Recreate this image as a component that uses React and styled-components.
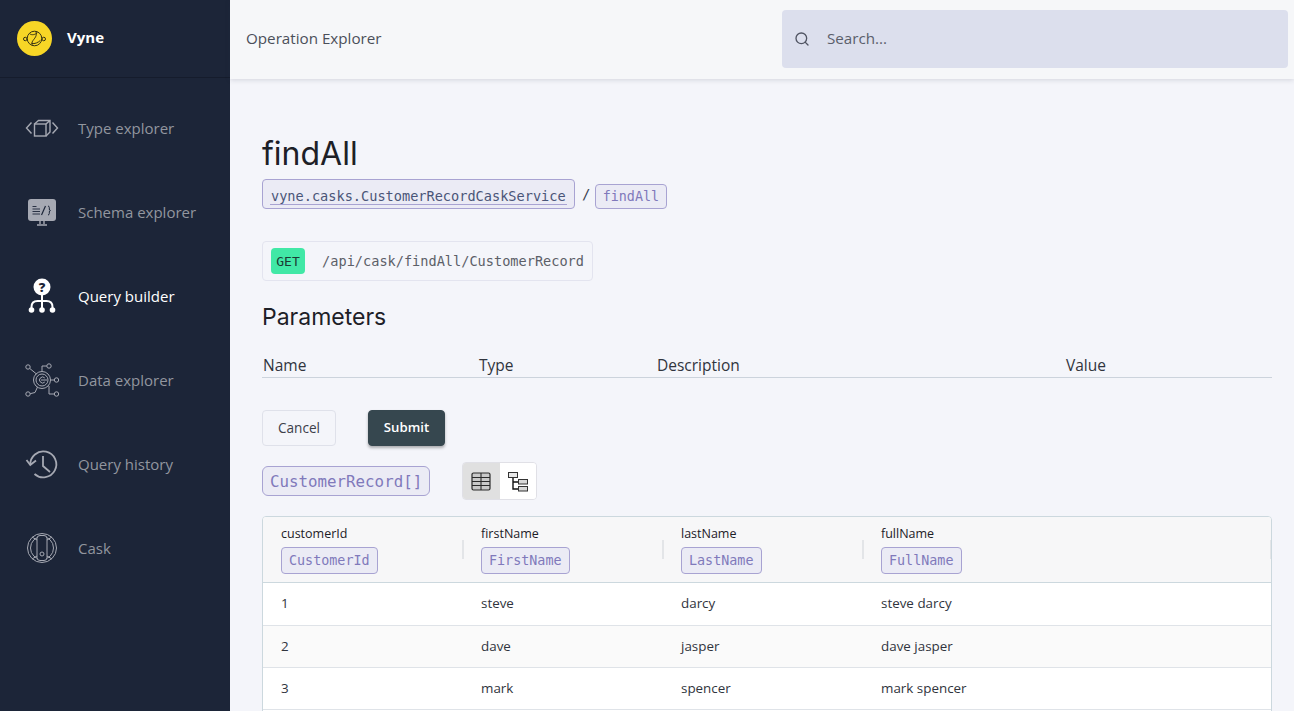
import React from 'react';
import styled, { createGlobalStyle } from 'styled-components';
import { Search } from 'lucide-react';

const UI_FONT = '"Open Sans", "Liberation Sans", sans-serif';
const HEADING_FONT = 'Inter, "Liberation Sans", sans-serif';
const MONO_FONT = '"DejaVu Sans Mono", "Liberation Mono", monospace';

const GlobalStyle = createGlobalStyle`
	html, body {
		margin: 0;
		height: 100%;
		overflow: hidden;
	}
	body {
		font-family: ${UI_FONT};
		background: #f4f5fa;
		color: #1f2430;
	}
`

const Shell = styled.div`
	display: flex;
	height: 711px;
	overflow: hidden;
`

const Sidebar = styled.aside`
	flex: 0 0 230px;
	background: #1c2538;
	display: flex;
	flex-direction: column;
`

const Brand = styled.div`
	height: 78px;
	box-sizing: border-box;
	padding: 0 0 1px 17px;
	display: flex;
	align-items: center;
	gap: 15px;
	border-bottom: 1px solid #151c2c;
	font-size: 15px;
	font-weight: 700;
	color: #ffffff;
`

const BrandName = styled.span`
	margin-bottom: 2px;
`

const Nav = styled.nav`
	padding-top: 8px;
	display: flex;
	flex-direction: column;
`

const NavItem = styled.a`
	height: 84px;
	padding-left: 22px;
	display: flex;
	align-items: center;
	gap: 16px;
	font-size: 15px;
	font-weight: 500;
	color: ${props => props.$active ? '#ffffff' : '#92969f'};
`

const Main = styled.div`
	flex: 1;
	min-width: 0;
	display: flex;
	flex-direction: column;
`

const TopBar = styled.header`
	flex: 0 0 79px;
	box-sizing: border-box;
	padding: 10px 6px 11px 16px;
	display: flex;
	align-items: stretch;
	justify-content: space-between;
	background: #f6f7f9;
	box-shadow: 0 1px 5px rgba(40, 45, 70, 0.16);
	position: relative;
`

const PageName = styled.div`
	align-self: center;
	margin-bottom: 2px;
	font-size: 15.2px;
	color: #4b4f59;
`

const SearchBox = styled.label`
	width: 506px;
	box-sizing: border-box;
	padding-left: 12px;
	display: flex;
	align-items: center;
	gap: 17px;
	background: #dcdfed;
	border-radius: 4px;
	color: #505462;
`

const SearchInput = styled.input`
	flex: 1;
	padding: 0;
	margin-bottom: 2px;
	border: 0;
	outline: 0;
	background: transparent;
	font-family: ${UI_FONT};
	font-size: 15.2px;
	color: #505462;
	&::placeholder {
		color: #5a5e6b;
		opacity: 1;
	}
`

const Content = styled.main`
	padding: 55px 22px 0 32px;
`

const Title = styled.h1`
	margin: 0;
	font-family: ${HEADING_FONT};
	font-size: 32px;
	line-height: 40px;
	font-weight: 400;
	color: #1d2027;
`

const Breadcrumb = styled.div`
	margin-top: 5px;
	display: flex;
	align-items: flex-end;
`

const Slash = styled.span`
	width: 20px;
	box-sizing: border-box;
	padding-left: 3px;
	text-align: center;
	font-family: ${MONO_FONT};
	font-size: 14px;
	line-height: 30px;
	color: #3a3f50;
`

const TypeBadge = styled.span`
	display: inline-flex;
	align-items: center;
	box-sizing: border-box;
	height: ${props => props.$height || 25}px;
	padding: 0 ${props => props.$pad || 7}px;
	border: 1px solid #a8a3d2;
	border-radius: ${props => props.$radius || 4}px;
	background: #ebebf5;
	font-family: ${MONO_FONT};
	font-size: ${props => props.$size || 13.4}px;
	color: #8079bb;
	white-space: nowrap;
`

const ServiceBadge = styled(TypeBadge)`
	color: #4a5578;
`

const ServiceName = styled.span`
	border-bottom: 1px solid #a8a3d2;
	padding: 5px 1px 0;
	line-height: 16px;
`

const Route = styled.div`
	margin-top: 32px;
	width: 331px;
	height: 40px;
	box-sizing: border-box;
	padding: 0 8px;
	display: flex;
	align-items: center;
	gap: 17px;
	border: 1px solid #e3e4ef;
	border-radius: 4px;
`

const Verb = styled.span`
	width: 36px;
	height: 26px;
	display: flex;
	align-items: center;
	justify-content: center;
	border-radius: 4px;
	background: #41e8a6;
	font-family: ${MONO_FONT};
	font-size: 13px;
	color: #1c3b34;
`

const RoutePath = styled.span`
	font-family: ${MONO_FONT};
	font-size: 13.6px;
	color: #5c5f68;
	white-space: nowrap;
`

const SectionTitle = styled.h2`
	margin: 21px 0 0;
	font-family: ${HEADING_FONT};
	font-size: 23px;
	line-height: 30px;
	font-weight: 400;
	color: #1d2027;
`

const ParamsHeader = styled.div`
	margin-top: 21px;
	height: 25px;
	box-sizing: border-box;
	padding-left: 1px;
	display: grid;
	grid-template-columns: 216px 178px 409px 1fr;
	border-bottom: 1px solid #ccd3dc;
	font-size: 15.5px;
	line-height: 24px;
	color: #30343d;
`

const Actions = styled.div`
	margin-top: 32px;
	display: flex;
	gap: 32px;
`

const Button = styled.button`
	height: 36px;
	box-sizing: border-box;
	padding: 0 0 2px;
	width: ${props => props.$width}px;
	border-radius: 4px;
	font-family: ${UI_FONT};
	font-size: ${props => props.$primary ? 13.2 : 13.6}px;
	font-weight: ${props => props.$primary ? 600 : 400};
	border: 1px solid ${props => props.$primary ? '#36474f' : '#dfe1ea'};
	background: ${props => props.$primary ? '#36474f' : 'transparent'};
	color: ${props => props.$primary ? '#ffffff' : '#3c404a'};
	box-shadow: ${props => props.$primary ? '0 2px 3px rgba(0, 0, 0, 0.3)' : 'none'};
`

const ResultBar = styled.div`
	margin-top: 16px;
	display: flex;
	align-items: center;
	gap: 32px;
`

const ViewToggle = styled.div`
	display: flex;
	width: 75px;
	height: 38px;
	box-sizing: border-box;
	border: 1px solid #e0e0e6;
	border-radius: 4px;
	overflow: hidden;
`

const ToggleOption = styled.button`
	flex: 1;
	padding: 0;
	border: 0;
	display: flex;
	align-items: center;
	justify-content: center;
	background: ${props => props.$active ? '#e0e0e0' : '#ffffff'};
`

const Results = styled.div`
	margin-top: 16px;
	border: 1px solid #ccd8de;
	border-radius: 4px;
	overflow: hidden;
	background: #ffffff;
`

const GridRow = styled.div`
	display: grid;
	grid-template-columns: repeat(3, 200px) 1fr;
`

const HeaderRow = styled(GridRow)`
	height: 66px;
	box-sizing: border-box;
	background: #f7f7f8;
	border-bottom: 1px solid #ccd8de;
`

const HeaderCell = styled.div`
	position: relative;
	padding: 8px 18px 0;
	font-size: 12.5px;
	line-height: 18px;
	color: #1d2027;
	display: flex;
	flex-direction: column;
	align-items: flex-start;
	gap: 4px;
	&::after {
		content: '';
		position: absolute;
		right: -1px;
		top: 23px;
		width: 2px;
		height: 19px;
		background: #e3e5e8;
	}
`

const BodyRow = styled(GridRow)`
	height: ${props => props.$height}px;
	box-sizing: border-box;
	padding-bottom: 2px;
	align-items: center;
	background: ${props => props.$alt ? '#fafafa' : '#ffffff'};
	border-bottom: 1px solid #dfe3e8;
`

const BodyCell = styled.div`
	padding-left: 18px;
	font-size: 13.4px;
	color: #30343d;
`

const LOGO = '#2f2d14';
const NAV_GREY = '#a6a9b3';

const VyneLogo = () => (
	<svg width="35" height="35" viewBox="0 0 36 36">
		<circle cx="18" cy="18" r="18" fill="#f7d626" />
		<g fill="none" stroke={LOGO} strokeWidth="1">
			<circle cx="18" cy="18" r="7.5" />
			<circle cx="8.5" cy="18.5" r="1.8" />
			<circle cx="27.5" cy="18.5" r="1.8" />
			<path d="M19.5 11 C21 15 18 18 16.5 20 C15 22 15 24 16 25" />
			<path d="M13 13 C15 15 19 14 21 12 M15 23 C18 24 22 22 24 20" />
		</g>
	</svg>
)

const TypeIcon = () => (
	<svg width="40" height="40" viewBox="0 0 40 40" fill="none" stroke={NAV_GREY} strokeWidth="1.4">
		<path d="M9.5 14.5 L4.5 20 L9.5 25.5" />
		<path d="M30.5 14.5 L35.5 20 L30.5 25.5" />
		<rect x="12.5" y="16" width="11.5" height="12" />
		<path d="M12.5 16 L16.5 12.5 H28 V24 L24 28 M24 16 L28 12.5" />
	</svg>
)

const SchemaIcon = () => (
	<svg width="40" height="40" viewBox="0 0 40 40">
		<rect x="6" y="7" width="28" height="22" rx="3" fill={NAV_GREY} />
		<path d="M18 29 V32 M22 29 V32 M15 33 H25" stroke={NAV_GREY} strokeWidth="1.4" fill="none" />
		<path d="M10.5 14.5 H14.5 M10.5 17 H18 M10.5 19.5 H18 M10.5 22 H18" stroke="#1c2538" strokeWidth="0.9" fill="none" />
		<path d="M19.5 23 L23.5 14" stroke="#1c2538" strokeWidth="1.2" fill="none" />
		<path d="M26 14 C28 14 27 17 27.5 18 C28 18.5 28.5 18.5 28.5 18.5 C28.5 18.5 28 18.5 27.5 19 C27 20 28 23 26 23" stroke="#1c2538" strokeWidth="1" fill="none" />
	</svg>
)

const QueryIcon = () => (
	<svg width="40" height="40" viewBox="0 0 40 40">
		<circle cx="20" cy="11" r="8.5" fill="#ffffff" />
		<text x="20" y="15.5" textAnchor="middle" fontFamily={UI_FONT} fontSize="13" fontWeight="800" fill="#1c2538">?</text>
		<path d="M20 19 V34 M9.5 34 V31 Q9.5 25 15.5 25 H24.5 Q30.5 25 30.5 31 V34" fill="none" stroke="#ffffff" strokeWidth="2" />
		<circle cx="9.5" cy="34" r="2.8" fill="#ffffff" />
		<circle cx="20" cy="34" r="2.8" fill="#ffffff" />
		<circle cx="30.5" cy="34" r="2.8" fill="#ffffff" />
	</svg>
)

const DataIcon = () => (
	<svg width="40" height="40" viewBox="0 0 40 40" fill="none" stroke={NAV_GREY} strokeWidth="1">
		<circle cx="20" cy="20" r="8.5" />
		<circle cx="20" cy="20" r="6" />
		<path d="M22.8 18 A3 3 0 1 0 22.8 22 M19 20 H25" />
		<circle cx="6" cy="7" r="2.2" />
		<circle cx="27" cy="6" r="2.2" />
		<circle cx="34.5" cy="20" r="2.2" />
		<circle cx="34.5" cy="34" r="2.2" />
		<circle cx="6" cy="34" r="2.2" />
		<path d="M7.8 8.5 L14.5 14 M24.8 6 H20 V11.5 M32.3 20 H28.5 M32.3 34 H27 V26 M8.2 33.7 L13 32.5 L15.5 27" />
	</svg>
)

const HistoryIcon = () => (
	<svg width="40" height="40" viewBox="0 0 40 40" fill="none" stroke={NAV_GREY} strokeWidth="1.8">
		<path d="M8.3 21 A13 13 0 1 1 12.5 30" />
		<path d="M4.5 16 L8.3 21 L14 16.5" />
		<path d="M21 12 V22 L28 28" />
	</svg>
)

const CaskIcon = () => (
	<svg width="40" height="40" viewBox="0 0 40 40" fill="none" stroke={NAV_GREY} strokeWidth="1">
		<circle cx="20" cy="20" r="14.5" />
		<circle cx="20" cy="20" r="11.5" />
		<rect x="15" y="7.5" width="10" height="25" rx="3" fill="#1c2538" />
		<circle cx="20" cy="26" r="2" />
		<path d="M15 12 L10 9 M25 12 L30 9 M15 28 L10 31 M25 28 L30 31" />
	</svg>
)

const TableIcon = () => (
	<svg width="20" height="20" viewBox="0 0 20 20">
		<rect x="1" y="2" width="18" height="17" rx="1.5" fill="#c9c9c9" stroke="#2a2a2a" strokeWidth="1.2" />
		<path d="M1 6.5 H19 M1 10.5 H19 M1 14.5 H19 M10 2 V19" stroke="#2a2a2a" strokeWidth="1.1" fill="none" />
	</svg>
)

const TreeIcon = () => (
	<svg width="22" height="22" viewBox="0 0 22 22">
		<path d="M6 7 V19 H11 M6 12 H11" stroke="#111111" strokeWidth="1.4" fill="none" />
		<rect x="1.5" y="2.5" width="9" height="5" fill="#e8e8e8" stroke="#333333" />
		<rect x="11.5" y="9.5" width="9" height="4.5" fill="#d8d8d8" stroke="#333333" />
		<rect x="11.5" y="16.5" width="9" height="4.5" fill="#d8d8d8" stroke="#333333" />
	</svg>
)

const navItems = [
	{ label: 'Type explorer', Icon: TypeIcon },
	{ label: 'Schema explorer', Icon: SchemaIcon },
	{ label: 'Query builder', Icon: QueryIcon, active: true },
	{ label: 'Data explorer', Icon: DataIcon },
	{ label: 'Query history', Icon: HistoryIcon },
	{ label: 'Cask', Icon: CaskIcon },
];

const columns = [
	{ name: 'customerId', type: 'CustomerId' },
	{ name: 'firstName', type: 'FirstName' },
	{ name: 'lastName', type: 'LastName' },
	{ name: 'fullName', type: 'FullName' },
];

const rows = [
	{ id: 1, first: 'steve', last: 'darcy', height: 43 },
	{ id: 2, first: 'dave', last: 'jasper', height: 42, alt: true },
	{ id: 3, first: 'mark', last: 'spencer', height: 42 },
];

export default function App() {
	return <>
		<GlobalStyle />
		<Shell>
			<Sidebar>
				<Brand>
					<VyneLogo />
					<BrandName>Vyne</BrandName>
				</Brand>
				<Nav>
					{navItems.map(({ label, Icon, active }) => (
						<NavItem key={label} $active={active}>
							<Icon />
							{label}
						</NavItem>
					))}
				</Nav>
			</Sidebar>
			<Main>
				<TopBar>
					<PageName>Operation Explorer</PageName>
					<SearchBox>
						<Search size={16} strokeWidth={2} />
						<SearchInput placeholder="Search..." />
					</SearchBox>
				</TopBar>
				<Content>
					<Title>findAll</Title>
					<Breadcrumb>
						<ServiceBadge $height={30} $size={13.6}>
							<ServiceName>vyne.casks.CustomerRecordCaskService</ServiceName>
						</ServiceBadge>
						<Slash>/</Slash>
						<TypeBadge>findAll</TypeBadge>
					</Breadcrumb>
					<Route>
						<Verb>GET</Verb>
						<RoutePath>/api/cask/findAll/CustomerRecord</RoutePath>
					</Route>
					<SectionTitle>Parameters</SectionTitle>
					<ParamsHeader>
						<span>Name</span>
						<span>Type</span>
						<span>Description</span>
						<span>Value</span>
					</ParamsHeader>
					<Actions>
						<Button $width={74}>Cancel</Button>
						<Button $width={77} $primary>Submit</Button>
					</Actions>
					<ResultBar>
						<TypeBadge $height={30} $size={15.8} $radius={6}>CustomerRecord[]</TypeBadge>
						<ViewToggle>
							<ToggleOption $active><TableIcon /></ToggleOption>
							<ToggleOption><TreeIcon /></ToggleOption>
						</ViewToggle>
					</ResultBar>
					<Results>
						<HeaderRow>
							{columns.map(column => (
								<HeaderCell key={column.name}>
									{column.name}
									<TypeBadge $height={27}>{column.type}</TypeBadge>
								</HeaderCell>
							))}
						</HeaderRow>
						{rows.map(row => (
							<BodyRow key={row.id} $height={row.height} $alt={row.alt}>
								<BodyCell>{row.id}</BodyCell>
								<BodyCell>{row.first}</BodyCell>
								<BodyCell>{row.last}</BodyCell>
								<BodyCell>{row.first} {row.last}</BodyCell>
							</BodyRow>
						))}
						<BodyRow $height={42} />
					</Results>
				</Content>
			</Main>
		</Shell>
	</>
}
